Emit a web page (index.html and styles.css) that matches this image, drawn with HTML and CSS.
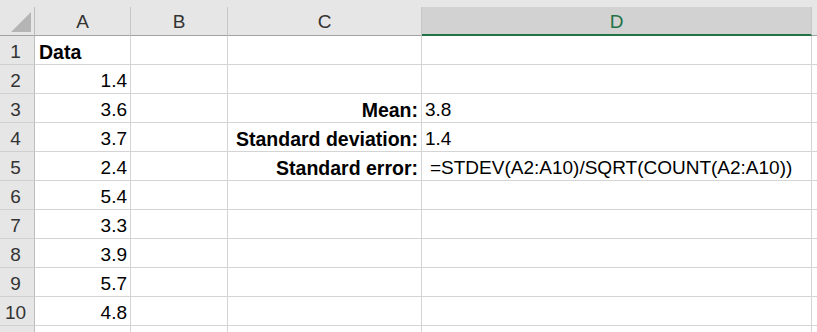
FILE: index.html
```html
<!DOCTYPE html>
<html>
<head>
<meta charset="utf-8">
<link rel="stylesheet" href="styles.css">
</head>
<body>
<div class="sheet">
  <div class="strip"></div>
  <div class="grid">
    <div class="hdr corner"><svg class="tri" width="34" height="28" viewBox="0 0 34 28"><polygon points="31,5 31,25 11,25" fill="#b5b5b5"/></svg></div>
    <div class="hdr col">A</div>
    <div class="hdr col">B</div>
    <div class="hdr col">C</div>
    <div class="hdr col sel">D</div>
    <div class="hdr col last"></div>

    <div class="rh">1</div><div class="c b">Data</div><div class="c"></div><div class="c"></div><div class="c"></div><div class="c last"></div>
    <div class="rh">2</div><div class="c r">1.4</div><div class="c"></div><div class="c"></div><div class="c"></div><div class="c last"></div>
    <div class="rh">3</div><div class="c r">3.6</div><div class="c"></div><div class="c r b">Mean:</div><div class="c">3.8</div><div class="c last"></div>
    <div class="rh">4</div><div class="c r">3.7</div><div class="c"></div><div class="c r b">Standard deviation:</div><div class="c">1.4</div><div class="c last"></div>
    <div class="rh">5</div><div class="c r">2.4</div><div class="c"></div><div class="c r b">Standard error:</div><div class="c f">=STDEV(A2:A10)/SQRT(COUNT(A2:A10))</div><div class="c last"></div>
    <div class="rh">6</div><div class="c r">5.4</div><div class="c"></div><div class="c"></div><div class="c"></div><div class="c last"></div>
    <div class="rh">7</div><div class="c r">3.3</div><div class="c"></div><div class="c"></div><div class="c"></div><div class="c last"></div>
    <div class="rh">8</div><div class="c r">3.9</div><div class="c"></div><div class="c"></div><div class="c"></div><div class="c last"></div>
    <div class="rh">9</div><div class="c r">5.7</div><div class="c"></div><div class="c"></div><div class="c"></div><div class="c last"></div>
    <div class="rh">10</div><div class="c r">4.8</div><div class="c"></div><div class="c"></div><div class="c"></div><div class="c last"></div>
    <div class="rh"></div><div class="c"></div><div class="c"></div><div class="c"></div><div class="c"></div><div class="c last"></div>
  </div>
</div>
</body>
</html>
```
FILE: styles.css
```css
html, body {
  margin: 0;
  padding: 0;
  background: #ffffff;
  overflow: hidden;
}
.sheet {
  width: 817px;
  height: 332px;
  overflow: hidden;
  font-family: "Liberation Sans", Arial, sans-serif;
  font-size: 19px;
  color: #000;
}
.strip {
  height: 7px;
  background: #e6e6e6;
}
.grid {
  display: grid;
  grid-template-columns: 35px 96px 97px 194px 390px 60px;
  grid-auto-rows: 29px;
}
.grid > div {
  box-sizing: border-box;
  white-space: nowrap;
  overflow: visible;
}
.hdr {
  background: #e6e6e6;
  border-right: 1px solid #c6c6c6;
  border-bottom: 1px solid #a3a3a3;
  color: #333;
  text-align: center;
  line-height: 24px;
  padding-top: 3px;
}
.hdr.corner {
  padding: 0;
  border-right-color: #bdbdbd;
}
.tri {
  display: block;
}
.hdr.sel {
  background: #d2d2d2;
  border-bottom: 2px solid #217346;
  color: #217346;
}
.rh {
  background: #e6e6e6;
  border-right: 1px solid #bdbdbd;
  border-bottom: 1px solid #d0d0d0;
  color: #333;
  text-align: center;
  padding-right: 3px;
  line-height: 24px;
  padding-top: 4px;
}
.c {
  border-right: 1px solid #d4d4d4;
  border-bottom: 1px solid #d4d4d4;
  line-height: 24px;
  padding: 4px 3px 0 3px;
}
.c.r {
  text-align: right;
}
.c.b {
  font-weight: bold;
  font-size: 19.5px;
}
.c.f {
  padding-left: 8px;
}
.c:nth-child(6n+2).b {
  padding-left: 4px;
}
```
